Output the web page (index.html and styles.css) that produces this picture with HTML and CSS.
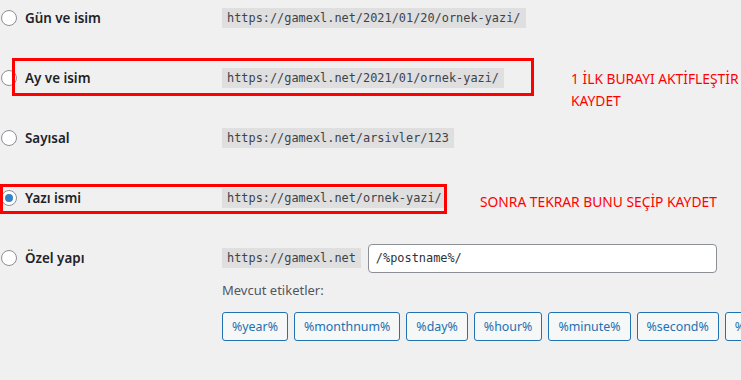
FILE: index.html
```html
<!DOCTYPE html>
<html lang="tr">

<head>
    <meta charset="UTF-8">
    <meta name="viewport" content="width=device-width, initial-scale=1.0">
    <title>Kalıcı bağlantı ayarları</title>
    <link rel="stylesheet" href="styles.css">
</head>

<body>
    <div class="options">
        <div class="option">
            <label class="choice"><span class="radio"></span>Gün ve isim</label>
            <div class="value"><code>https://gamexl.net/2021/01/20/ornek-yazi/</code></div>
        </div>

        <div class="option">
            <label class="choice"><span class="radio"></span>Ay ve isim</label>
            <div class="value"><code>https://gamexl.net/2021/01/ornek-yazi/</code></div>
        </div>

        <div class="option">
            <label class="choice"><span class="radio"></span>Sayısal</label>
            <div class="value"><code>https://gamexl.net/arsivler/123</code></div>
        </div>

        <div class="option">
            <label class="choice"><span class="radio checked"></span>Yazı ismi</label>
            <div class="value"><code>https://gamexl.net/ornek-yazi/</code></div>
        </div>

        <div class="option custom">
            <label class="choice"><span class="radio"></span>Özel yapı</label>
            <div class="value">
                <div class="structure">
                    <code>https://gamexl.net</code>
                    <input type="text" class="field" value="/%postname%/">
                </div>
                <p class="tags-title">Mevcut etiketler:</p>
                <div class="tags">
                    <button class="tag">%year%</button>
                    <button class="tag">%monthnum%</button>
                    <button class="tag">%day%</button>
                    <button class="tag">%hour%</button>
                    <button class="tag">%minute%</button>
                    <button class="tag">%second%</button>
                    <button class="tag">%post_id%</button>
                </div>
            </div>
        </div>
    </div>

    <!-- annotations drawn over the screenshot -->
    <div class="mark mark-one"></div>
    <div class="mark mark-two"></div>
    <p class="note note-one">1 İLK BURAYI AKTİFLEŞTİR<br>KAYDET</p>
    <p class="note note-two">SONRA TEKRAR BUNU SEÇİP KAYDET</p>
</body>

</html>
```

FILE: styles.css
```css
* {
    margin: 0;
    padding: 0;
    box-sizing: border-box;
}

body {
    background-color: #f0f0f1;
    color: #1d2327;
    font-family: 'Noto Sans', 'Open Sans', sans-serif;
    font-size: 13px;
    overflow: hidden;
    width: 741px;
    height: 380px;
    position: relative;
}

.options {
    display: flex;
    flex-direction: column;
    gap: 24px;
}

.option {
    display: flex;
    align-items: center;
    height: 36px;
}

.option.custom {
    align-items: flex-start;
    height: auto;
}

.choice {
    width: 222px;
    flex-shrink: 0;
    display: flex;
    align-items: center;
    height: 36px;
    font-weight: 600;
    font-size: 13.4px;
}

.radio {
    width: 16px;
    height: 16px;
    border: 1px solid #8c8f94;
    border-radius: 50%;
    background-color: #fff;
    margin-left: 1px;
    margin-right: 8px;
    display: flex;
    align-items: center;
    justify-content: center;
}

.radio.checked:before {
    content: '';
    width: 8px;
    height: 8px;
    border-radius: 50%;
    background-color: #3582c4;
}

code {
    display: inline-block;
    background-color: rgba(0, 0, 0, 0.07);
    font-family: 'DejaVu Sans Mono', monospace;
    font-size: 11.9px;
    line-height: 20px;
    padding: 0 5px;
    color: #3c434a;
}

.structure {
    display: flex;
    align-items: center;
    gap: 7px;
    height: 36px;
}

.field {
    width: 349px;
    height: 29px;
    border: 1px solid #8c8f94;
    border-radius: 4px;
    background-color: #fff;
    padding: 0 7px;
    font-family: 'DejaVu Sans Mono', monospace;
    font-size: 11.9px;
    color: #2c3338;
}

.tags-title {
    margin-top: 4px;
    line-height: 20px;
    color: #50575e;
}

.tags {
    display: flex;
    gap: 6px;
    margin-top: 12px;
    width: 600px;
}

.tag {
    flex-shrink: 0;
    height: 29px;
    padding: 0 9px;
    border: 1px solid #2271b1;
    border-radius: 3px;
    background-color: #f6f7f7;
    color: #2271b1;
    font-family: 'Noto Sans', 'Open Sans', sans-serif;
    font-size: 12.4px;
}

.mark {
    position: absolute;
    border: 3px solid #ff0000;
}

.mark-one {
    left: 12px;
    top: 58px;
    width: 522px;
    height: 38px;
}

.mark-two {
    left: 0;
    top: 184px;
    width: 447px;
    height: 30px;
}

.note {
    position: absolute;
    color: #ff0000;
    font-size: 13.8px;
    line-height: 22px;
    white-space: nowrap;
}

.note-one {
    left: 571px;
    top: 68px;
}

.note-two {
    left: 480px;
    top: 191px;
}
```
